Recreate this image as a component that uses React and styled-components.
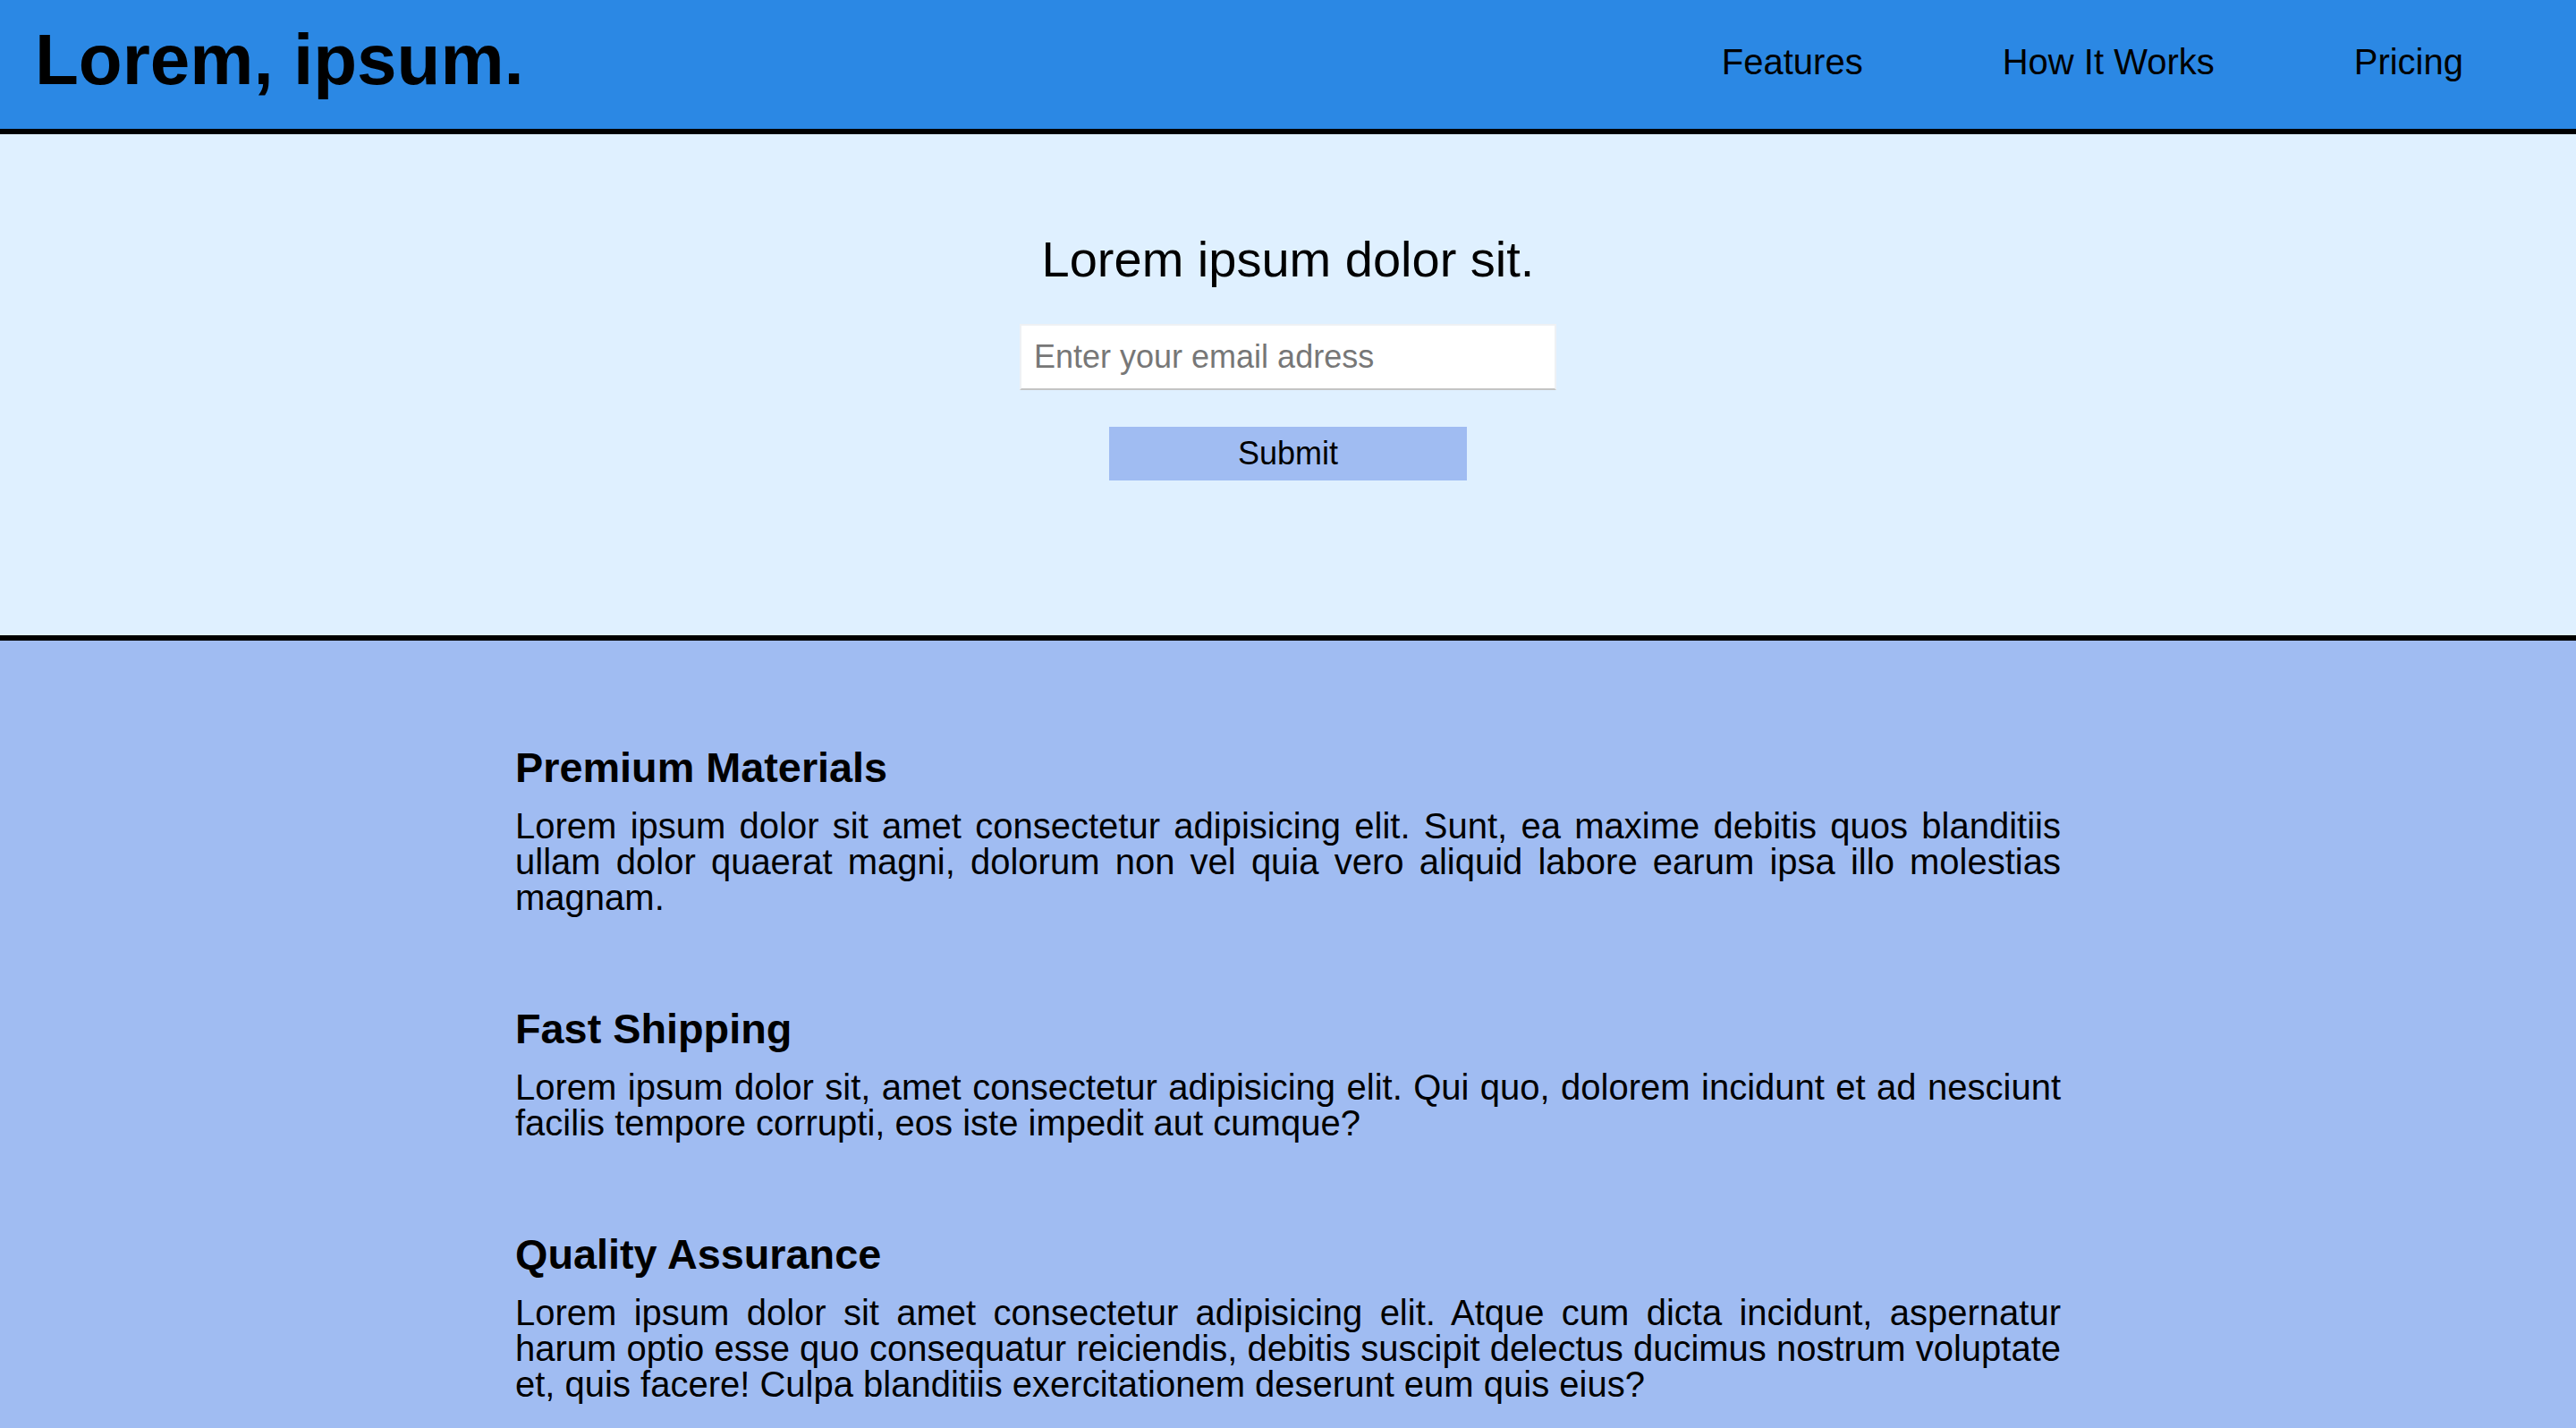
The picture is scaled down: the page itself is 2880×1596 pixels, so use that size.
import React from "react";
import styled, { createGlobalStyle } from "styled-components";

const features = [
  {
    title: "Premium Materials",
    text: "Lorem ipsum dolor sit amet consectetur adipisicing elit. Sunt, ea maxime debitis quos blanditiis ullam dolor quaerat magni, dolorum non vel quia vero aliquid labore earum ipsa illo molestias magnam.",
  },
  {
    title: "Fast Shipping",
    text: "Lorem ipsum dolor sit, amet consectetur adipisicing elit. Qui quo, dolorem incidunt et ad nesciunt facilis tempore corrupti, eos iste impedit aut cumque?",
  },
  {
    title: "Quality Assurance",
    text: "Lorem ipsum dolor sit amet consectetur adipisicing elit. Atque cum dicta incidunt, aspernatur harum optio esse quo consequatur reiciendis, debitis suscipit delectus ducimus nostrum voluptate et, quis facere! Culpa blanditiis exercitationem deserunt eum quis eius?",
  },
];

function App() {
  return (
    <>
      <GlobalStyle />
      <Header>
        <Logo>Lorem, ipsum.</Logo>
        <Nav>
          <NavLink href="#features">Features</NavLink>
          <NavLink href="#how">How It Works</NavLink>
          <NavLink href="#pricing">Pricing</NavLink>
        </Nav>
      </Header>

      <Hero>
        <HeroTitle>Lorem ipsum dolor sit.</HeroTitle>
        <EmailInput type="email" placeholder="Enter your email adress" />
        <SubmitButton type="button">Submit</SubmitButton>
      </Hero>

      <Features id="features">
        <FeatureList>
          {features.map((f) => (
            <Feature key={f.title}>
              <FeatureTitle>{f.title}</FeatureTitle>
              <FeatureText>{f.text}</FeatureText>
            </Feature>
          ))}
        </FeatureList>
      </Features>
    </>
  );
}

const GlobalStyle = createGlobalStyle`
  * {
    box-sizing: border-box;
  }
  body {
    margin: 0;
    font-family: "Liberation Sans", Arial, sans-serif;
    font-size: 40px;
    color: #000;
    background: #a0bcf2;
  }
`;

const Header = styled.header`
  height: 150px;
  display: flex;
  align-items: center;
  justify-content: space-between;
  padding: 0 126px 0 39px;
  background: #2b88e4;
  border-bottom: 6px solid #000;
`;

const Logo = styled.h1`
  margin: 0;
  font-size: 80px;
  font-weight: 700;
  line-height: 1;
  padding-bottom: 11px;
`;

const Nav = styled.nav`
  display: flex;
  gap: 156px;
  padding-bottom: 5px;
`;

const NavLink = styled.a`
  color: #000;
  text-decoration: none;
  font-size: 40px;
`;

const Hero = styled.section`
  height: 566px;
  display: flex;
  flex-direction: column;
  align-items: center;
  padding-top: 107px;
  background: #dff0ff;
  border-bottom: 6px solid #000;
`;

const HeroTitle = styled.h2`
  margin: 0 0 40px;
  font-size: 56px;
  font-weight: 400;
  line-height: normal;
`;

const EmailInput = styled.input`
  width: 600px;
  height: 74px;
  padding: 0 14px;
  font-family: "Liberation Sans", Arial, sans-serif;
  font-size: 36px;
  background: #fff;
  border: 2px solid #eef1f4;
  border-bottom: 2px solid #c4c4c4;
  outline: none;

  &::placeholder {
    color: #777;
  }
`;

const SubmitButton = styled.button`
  width: 400px;
  height: 60px;
  margin-top: 41px;
  font-family: "Liberation Sans", Arial, sans-serif;
  font-size: 36px;
  color: #000;
  background: #a0bcf2;
  border: none;
  cursor: pointer;
`;

const Features = styled.section`
  background: #a0bcf2;
  padding: 115px 0 60px;
`;

const FeatureList = styled.div`
  width: 60%;
  margin: 0 auto;
  display: flex;
  flex-direction: column;
  gap: 100px;
`;

const Feature = styled.article`
  display: flex;
  flex-direction: column;
  gap: 18px;
`;

const FeatureTitle = styled.h3`
  margin: 0;
  font-size: 46.8px;
  font-weight: 700;
  line-height: normal;
`;

const FeatureText = styled.p`
  margin: 0;
  font-size: 40px;
  line-height: 40px;
  text-align: justify;
`;

export default App;
